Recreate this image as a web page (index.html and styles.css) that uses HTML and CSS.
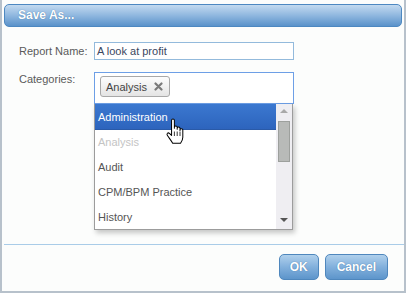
FILE: index.html
```html
<!DOCTYPE html>
<html>
<head>
    <title>Save As</title>
    <link rel="stylesheet" href="styles.css">
</head>
<body>

    <div class="dialog">
        <!-- Title bar -->
        <div class="titlebar">Save As...</div>

        <div class="form">
            <div class="row">
                <label class="label">Report Name:</label>
                <div class="input">A look at profit</div>
            </div>
            <div class="row">
                <label class="label">Categories:</label>
                <div class="picker">
                    <div class="picker-box">
                        <span class="tag">Analysis
                            <svg class="tag-x" width="9" height="9" viewBox="0 0 9 9"><path d="M1.5 1.5 L7.5 7.5 M7.5 1.5 L1.5 7.5" stroke="#7a7a7a" stroke-width="2.2" stroke-linecap="round"/></svg>
                        </span>
                    </div>

                    <!-- open dropdown -->
                    <div class="dropdown">
                        <ul class="options">
                            <li class="option selected">Administration</li>
                            <li class="option disabled">Analysis</li>
                            <li class="option">Audit</li>
                            <li class="option">CPM/BPM Practice</li>
                            <li class="option">History</li>
                        </ul>
                        <div class="scrollbar">
                            <span class="arrow up"></span>
                            <span class="thumb"></span>
                            <span class="arrow down"></span>
                        </div>
                    </div>

                    <svg class="cursor" width="21" height="27" viewBox="0 0 18 24">
                        <path d="M5.5 2 C5.5 0.6 8 0.6 8 2 L8 9 L8 8 C8 6.8 10.5 6.8 10.5 8 L10.5 10 L10.5 9 C10.5 7.8 13 7.8 13 9 L13 11 L13 10.5 C13 9.3 15.5 9.3 15.5 10.5 L15.5 17 C15.5 19.5 14.5 21 13.5 22.5 L6.5 22.5 C5.5 20.5 3.5 18 1.8 15.5 C0.8 14 2.2 12.4 3.8 13.8 L5.5 15.5 Z" fill="#fff" stroke="#000" stroke-width="0.9" stroke-linejoin="round"/>
                        <path d="M8 12 L8 16 M10.5 12 L10.5 16 M13 12 L13 16" stroke="#000" stroke-width="0.7"/>
                    </svg>
                </div>
            </div>
        </div>

        <div class="footer">
            <button class="btn ok">OK</button>
            <button class="btn">Cancel</button>
        </div>
    </div>

</body>
</html>
```

FILE: styles.css
```css
body { margin: 0; font-family: "Liberation Sans", Arial, sans-serif; font-size: 11px; background: #fff; }

.dialog {
    width: 406px;
    height: 293px;
    box-sizing: border-box;
    border: 2px solid #b7c1cb;
    border-top: 0;
    background: #fcfdfc;
    display: flex;
    flex-direction: column;
}

.titlebar {
    margin: 4px 2px 0 2px;
    height: 23px;
    box-sizing: border-box;
    padding-left: 13px;
    line-height: 21px;
    font-size: 12px;
    color: #fff;
    font-weight: bold;
    border: 1px solid #4d88c1;
    border-radius: 5px;
    background: linear-gradient(#c3daf0, #8fb7df 50%, #5a92ca);
    text-shadow: 0 0 1px #3b6c9c;
}

.form { padding: 15px 0 0 17px; display: flex; flex-direction: column; gap: 12px; }
.row { display: flex; align-items: flex-start; }
.label { width: 75px; color: #5a5a5a; line-height: 18px; }
.row:nth-child(2) .label { line-height: 14px; }

.input {
    width: 200px;
    height: 18px;
    box-sizing: border-box;
    border: 1px solid #93badc;
    background: #fff;
    color: #3a4660;
    padding-left: 2px;
    line-height: 16px;
}

.picker { position: relative; }
.picker-box {
    width: 200px;
    height: 32px;
    box-sizing: border-box;
    border: 1px solid #6d9fe6;
    background: #fff;
    padding: 3px 0 0 5px;
}
.tag {
    display: inline-flex;
    align-items: center;
    gap: 7px;
    height: 21px;
    box-sizing: border-box;
    padding: 0 6px 0 5px;
    border: 1px solid #a8a8a8;
    border-radius: 3px;
    background: linear-gradient(#fdfdfd, #e4e4e4);
    color: #444;
}

.dropdown {
    position: absolute;
    left: 0;
    top: 32px;
    width: 199px;
    height: 126px;
    box-sizing: border-box;
    border: 1px solid #9c9c9c;
    border-top: 0;
    background: #fff;
    display: flex;
    box-shadow: 2px 3px 5px rgba(0, 0, 0, 0.22);
}
.options { list-style: none; margin: 0; padding: 0; flex: 1; }
.option { height: 25px; line-height: 25px; padding-left: 3px; color: #555; }
.option.selected {
    color: #fff;
    background: linear-gradient(#3b78d0, #2d64bd);
    border-bottom: 1px solid #2a5aa8;
    height: 25px;
    line-height: 26px;
}
.option.disabled { color: #c4c4c4; }

.scrollbar {
    width: 16px;
    background: #efeef2;
    position: relative;
}
.arrow { position: absolute; left: 4px; width: 0; height: 0; border-left: 4px solid transparent; border-right: 4px solid transparent; }
.arrow.up { top: 5px; border-bottom: 4px solid #a9a9a9; }
.arrow.down { bottom: 7px; border-top: 4px solid #555; }
.thumb {
    position: absolute;
    left: 2px;
    top: 17px;
    width: 12px;
    height: 41px;
    box-sizing: border-box;
    background: #b8bab8;
    border: 1px solid #9da09d;
}

.cursor { position: absolute; left: 71px; top: 46px; }

.footer {
    margin: auto 0 0 2px;
    border-top: 1px solid #a9cce8;
    padding: 9px 16px 11px 0;
    display: flex;
    justify-content: flex-end;
    gap: 6px;
}
.btn {
    height: 26px;
    padding: 0 11px;
    border: 1px solid #4f87bd;
    border-radius: 5px;
    background: linear-gradient(#b0d0ec, #82b0dc 50%, #5d95cb);
    color: #fff;
    font-family: "Liberation Sans", Arial, sans-serif;
    font-weight: bold;
    font-size: 12px;
    text-shadow: 0 0 1px #3b6c9c;
}
.btn.ok { width: 40px; padding: 0; }
```
